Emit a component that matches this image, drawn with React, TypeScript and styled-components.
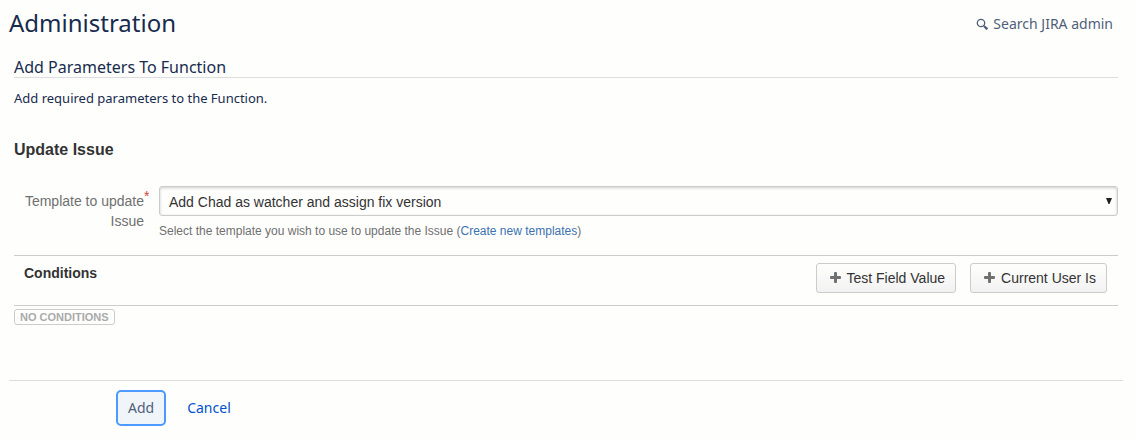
import React from "react";
import styled, { createGlobalStyle } from "styled-components";

const GlobalStyle = createGlobalStyle`
  *, *::before, *::after { box-sizing: border-box; }
  body {
    margin: 0;
    background: #fefefd;
    color: #172b4d;
    font: 14px/20px "Noto Sans", sans-serif;
  }
  h1, h2, h3, h4, p { margin: 0; font-weight: 400; }
  a { text-decoration: none; }
`;

const Page = styled.div`
  padding: 0 14px 12px 9px;
`;

const Header = styled.header`
  display: flex;
  align-items: flex-start;
  justify-content: space-between;
  padding: 9px 10px 0 0;
`;

const Title = styled.h1`
  font-size: 24px;
  line-height: 28px;
`;

const SearchLink = styled.a`
  display: flex;
  align-items: center;
  gap: 5px;
  margin-top: 5px;
  color: #505f79;
`;

const Main = styled.main`
  padding: 20px 5px 0;
`;

const SectionTitle = styled.h2`
  font-size: 16px;
  line-height: 20px;
  border-bottom: 1px solid #dddddd;
`;

const Description = styled.p`
  margin-top: 10px;
  font-size: 13px;
`;

const FunctionForm = styled.section`
  margin-top: 32px;
  color: #333333;
  font-family: "Liberation Sans", Arial, sans-serif;
`;

const FormTitle = styled.h3`
  font-size: 16px;
  font-weight: 700;
`;

const Field = styled.div`
  display: grid;
  grid-template-columns: 130px 1fr;
  column-gap: 15px;
  margin-top: 26px;
`;

const Label = styled.label`
  position: relative;
  padding-top: 5px;
  color: #707070;
  text-align: right;
`;

const Required = styled.span`
  position: absolute;
  top: 0;
  left: 100%;
  color: #d04437;
`;

const SelectWrap = styled.div`
  display: grid;
  align-items: center;

  > * { grid-area: 1 / 1; }

  svg {
    justify-self: end;
    margin-right: 6px;
    pointer-events: none;
  }
`;

const Select = styled.select`
  appearance: none;
  width: 100%;
  height: 30px;
  padding: 2px 24px 0 9px;
  border: 1px solid #cccccc;
  border-radius: 3px;
  background: #fefefd;
  box-shadow: inset 0 1px 3px #cccccc;
  color: #333333;
  font: inherit;
`;

const Hint = styled.p`
  margin-top: 5px;
  color: #707070;
  font-size: 12px;

  a { color: #3b73af; }
`;

const Conditions = styled.div`
  display: flex;
  align-items: flex-start;
  justify-content: space-between;
  margin-top: 14px;
  padding: 7px 11px 12px 10px;
  border: solid #cccccc;
  border-width: 1px 0;
`;

const ConditionsTitle = styled.h4`
  font-size: 14px;
  font-weight: 700;
`;

const ButtonGroup = styled.div`
  display: flex;
  gap: 14px;
`;

const ToolButton = styled.button`
  display: flex;
  align-items: center;
  gap: 6px;
  height: 30px;
  padding: 0 10px 0 13px;
  border: 1px solid #cccccc;
  border-radius: 3px;
  background: linear-gradient(#fefefd, #f2f2f2);
  color: #333333;
  font: inherit;
`;

const Lozenge = styled.span`
  display: inline-block;
  padding: 0 5px;
  border: 1px solid #cccccc;
  border-radius: 3px;
  color: #aaaaaa;
  font-size: 11px;
  font-weight: 700;
  line-height: 14px;
  text-transform: uppercase;
`;

const Status = styled.div`
  display: flex;
  margin-top: 3px;
`;

const Footer = styled.footer`
  display: flex;
  align-items: center;
  gap: 21px;
  margin-top: 55px;
  padding: 9px 0 0 107px;
  border-top: 1px solid #dddddd;
`;

const AddButton = styled.button`
  height: 36px;
  padding: 0 10px;
  border: 2px solid #4c9aff;
  border-radius: 5px;
  background: #f0f5f9;
  color: #505f79;
  font: inherit;
`;

const CancelLink = styled.a`
  color: #0052cc;
`;

const SearchIcon = () => (
  <svg width="12" height="12" viewBox="0 0 12 12" fill="none" stroke="#505f79" aria-hidden="true">
    <circle cx="5" cy="5" r="3.7" strokeWidth="1.3" />
    <path d="M7.6 7.6 8.8 8.8" strokeWidth="1.4" />
    <path d="M8.5 8.5 11.3 11.3" strokeWidth="2.3" />
  </svg>
);

const PlusIcon = () => (
  <svg width="11" height="12" viewBox="0 0 11 12" fill="#707070" aria-hidden="true">
    <rect x="4" y="0" width="3" height="11" rx="1" />
    <rect x="0" y="4" width="11" height="3" rx="1" />
  </svg>
);

const actions = ["Test Field Value", "Current User Is"];

export default function App() {
  return (
    <>
      <GlobalStyle />
      <Page>
        <Header>
          <Title>Administration</Title>
          <SearchLink href="#search">
            <SearchIcon />
            Search JIRA admin
          </SearchLink>
        </Header>
        <Main>
          <SectionTitle>Add Parameters To Function</SectionTitle>
          <Description>Add required parameters to the Function.</Description>
          <FunctionForm>
            <FormTitle>Update Issue</FormTitle>
            <Field>
              <Label htmlFor="template">
                Template to update Issue
                <Required>*</Required>
              </Label>
              <div>
                <SelectWrap>
                  <Select id="template">
                    <option>Add Chad as watcher and assign fix version</option>
                  </Select>
                  <svg width="6" height="6" viewBox="0 0 6 6" fill="#222222" aria-hidden="true">
                    <path d="M0 0H6L3.5 6H2.5Z" />
                  </svg>
                </SelectWrap>
                <Hint>
                  Select the template you wish to use to update the Issue (
                  <a href="#templates">Create new templates</a>)
                </Hint>
              </div>
            </Field>
            <Conditions>
              <ConditionsTitle>Conditions</ConditionsTitle>
              <ButtonGroup>
                {actions.map((action) => (
                  <ToolButton key={action} type="button">
                    <PlusIcon />
                    {action}
                  </ToolButton>
                ))}
              </ButtonGroup>
            </Conditions>
            <Status>
              <Lozenge>No conditions</Lozenge>
            </Status>
          </FunctionForm>
        </Main>
        <Footer>
          <AddButton type="submit">Add</AddButton>
          <CancelLink href="#cancel">Cancel</CancelLink>
        </Footer>
      </Page>
    </>
  );
}
